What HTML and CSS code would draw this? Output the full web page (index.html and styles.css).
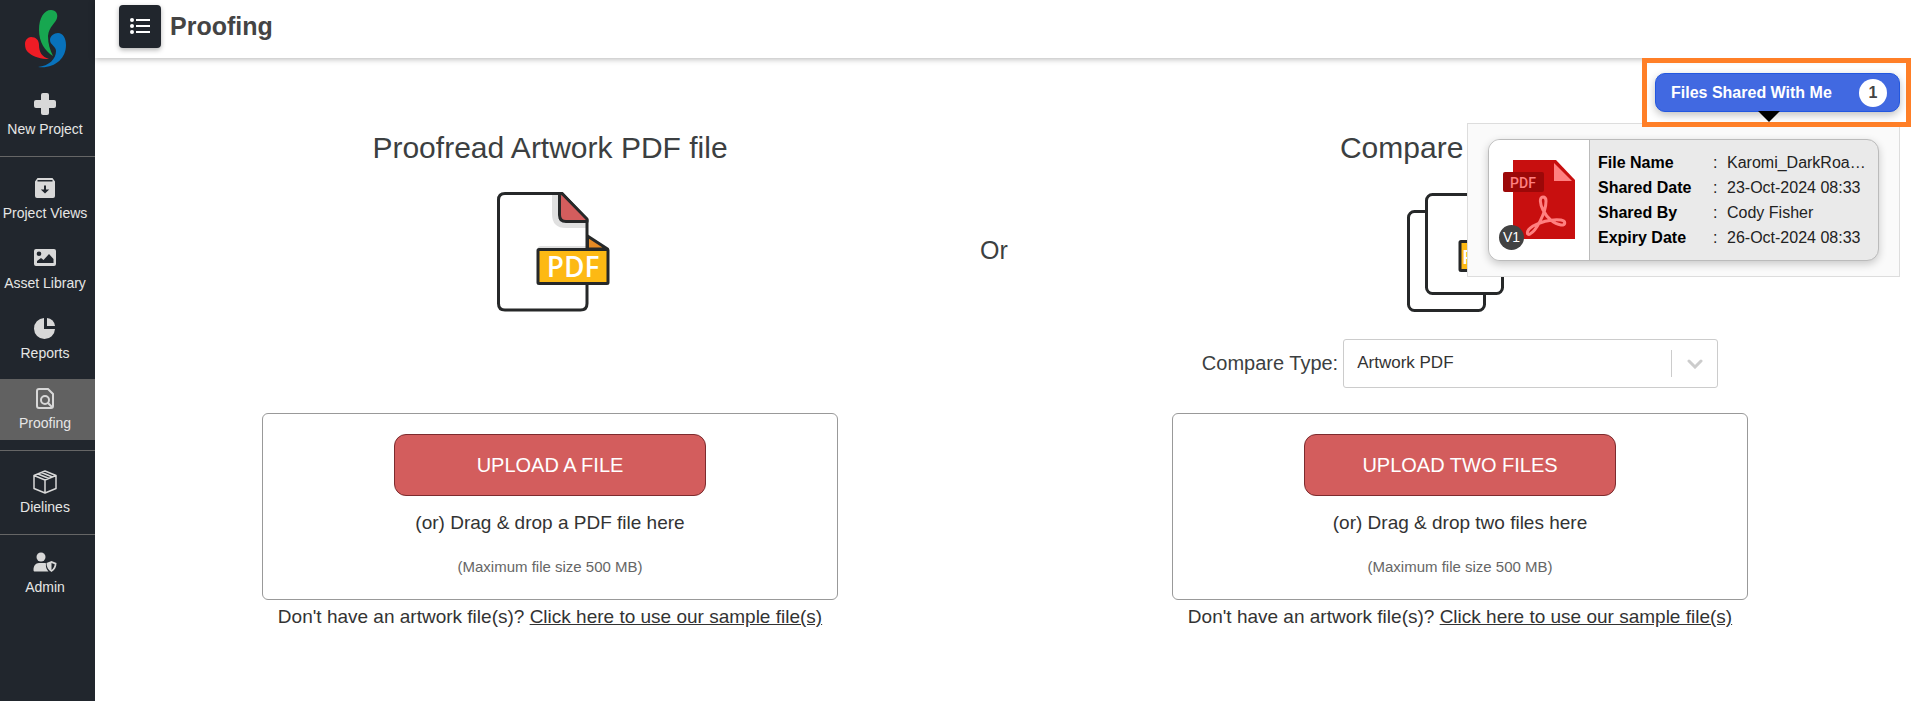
FILE: index.html
```
<!DOCTYPE html>
<html lang="en">
<head>
  <meta charset="UTF-8" />
  <meta name="viewport" content="width=device-width, initial-scale=1.0"/>
  <title>Proofing</title>
  <link rel="stylesheet" href="styles.css">
</head>
<body>
  <nav class="sidebar">
    <a href="#" class="logo" aria-label="Home">
      <svg width="42" height="58" viewBox="0 0 42 58">
        <path fill="#17a750" d="M26 0c5 0 7 4 6 8-1 5-8 8-9 18 0 8 2 14 5 20-8-5-14-14-14-26C14 8 19 0 26 0z"/>
        <path fill="#ee1c25" d="M6 27c5 0 8 3 8 8 0 7 3 12 10 14-8 0-15-2-20-6-3-2-4-5-4-9 0-4 3-7 6-7z"/>
        <path fill="#0872bc" d="M33 23c5 0 8 5 8 12 0 14-12 24-28 22 11-1 18-8 18-16 0-5-6-6-6-11 0-4 4-7 8-7z"/>
      </svg>
    </a>

    <div class="nav-group">
      <a href="#" class="nav-item">
        <svg class="nav-icon" viewBox="0 0 24 24"><rect x="8" y="1" width="8" height="22" rx="2"/><rect x="1" y="8" width="22" height="8" rx="2"/></svg>
        New Project
      </a>
    </div>

    <div class="nav-group">
      <a href="#" class="nav-item">
        <svg class="nav-icon" viewBox="0 0 24 24"><path fill-rule="evenodd" d="M4.500 2h15l2.500 3.500V20a2 2 0 0 1-2 2H4a2 2 0 0 1-2-2V5.500zM4.500 4v1.500h15V4zM11 9.500v4H7.800l4.200 4 4.200-4H13v-4z"/></svg>
        Project Views
      </a>
      <a href="#" class="nav-item">
        <svg class="nav-icon" viewBox="0 0 24 24"><path fill-rule="evenodd" d="M3 3h18a2 2 0 0 1 2 2v13a2 2 0 0 1-2 2H3a2 2 0 0 1-2-2V5a2 2 0 0 1 2-2zM6 5.500a2.300 2.300 0 1 0 0 4.600 2.300 2.300 0 0 0 0-4.600zM4 17h16.500v-4L16 8l-5.500 6L8 12l-4 3z"/></svg>
        Asset Library
      </a>
      <a href="#" class="nav-item">
        <svg class="nav-icon" viewBox="0 0 24 24"><path d="M11 2v11h11A10.500 10.500 0 1 1 11 2z"/><path d="M14 2a8.500 8.500 0 0 1 8 8h-8z"/></svg>
        Reports
      </a>
      <a href="#" class="nav-item active">
        <svg class="nav-icon" viewBox="0 0 24 24"><path fill="none" stroke="currentColor" stroke-width="2" d="M15 3H6a2 2 0 0 0-2 2v15a2 2 0 0 0 2 2h12a2 2 0 0 0 2-2V8zM15 17l4 4"/><circle cx="12" cy="14" r="4" fill="none" stroke="currentColor" stroke-width="2"/></svg>
        Proofing
      </a>
    </div>

    <div class="nav-group">
      <a href="#" class="nav-item">
        <svg class="nav-icon" viewBox="0 0 24 24"><path fill="none" stroke="currentColor" stroke-width="1.500" stroke-linejoin="round" d="M12 1l11 4.500v13L12 23 1 18.500v-13zM1 5.500L12 10l11-4.500M12 10v13M5 4l11 4.500M8.500 2.500l11 4.500"/></svg>
        Dielines
      </a>
    </div>

    <div class="nav-group">
      <a href="#" class="nav-item">
        <svg class="nav-icon" viewBox="0 0 24 24"><circle cx="8" cy="7" r="4.500"/><path d="M6 13h5c1 0 1.500 0 2 .5-.5 3 .5 6 2.500 8H2c-1 0-1.500-.5-1.500-1.500C.5 16 2.500 13 6 13z"/><path fill-rule="evenodd" d="M18.500 11l5 2c0 4-1.500 7-5 9-3.500-2-5-5-5-9zM18.500 13v7c2-1.500 3-3.500 3.200-5.700z"/></svg>
        Admin
      </a>
    </div>
  </nav>

  <div class="page">
    <header class="topbar">
      <button type="button" class="menu-btn" aria-label="Toggle menu">
        <svg width="20" height="18" viewBox="0 0 20 18" fill="#fff"><circle cx="2" cy="3" r="2"/><circle cx="2" cy="9" r="2"/><circle cx="2" cy="15" r="2"/><path d="M6 2h14v2H6zM6 8h14v2H6zM6 14h14v2H6z"/></svg>
      </button>
      <h1>Proofing</h1>
    </header>

    <main class="content">
      <section class="panel">
        <h2>Proofread Artwork PDF file</h2>
        <svg class="file-icon" viewBox="0 0 120 120">
          <path fill="#e0e0e0" d="M62 2v20q0 14 14 14h21v-8H68V2z"/>
          <path fill="#e0e0e0" d="M48 57v-1q0-2 3-2h46v3z"/>
          <g fill="none" stroke="#262829" stroke-width="3" stroke-linejoin="round">
            <path d="M72 1.500H15Q8.500 1.500 8.500 8v103.500q0 6.500 6.500 6.500h75.500q6.500 0 6.500-6.500V28z"/>
            <path fill="#d35d5d" d="M69.500 2v21q0 6.500 6.500 6.500h21V27L72 1.500z"/>
            <path fill="#e78a24" d="M97.500 44l20 13h-20z"/>
            <rect fill="#fdb913" x="48" y="57.500" width="70" height="34" rx="1"/>
          </g>
          <text x="83" y="85" text-anchor="middle" class="file-tag">PDF</text>
        </svg>

        <div class="drop-zone">
          <button type="button" class="upload-btn">UPLOAD A FILE</button>
          <p class="drop-text">(or) Drag &amp; drop a PDF file here</p>
          <p class="drop-limit">(Maximum file size 500 MB)</p>
        </div>
        <p class="sample">Don't have an artwork file(s)? <a href="#">Click here to use our sample file(s)</a></p>
      </section>

      <div class="or">Or</div>

      <section class="panel">
        <h2>Compare two files</h2>
        <svg class="file-icon" viewBox="0 0 120 120">
          <g fill="#fff" stroke="#262829" stroke-width="3" stroke-linejoin="round">
            <rect x="8.500" y="19.500" width="76" height="99" rx="6"/>
            <rect x="26.500" y="2.500" width="76" height="99" rx="6"/>
            <rect fill="#fdb913" x="60" y="49.500" width="54" height="29" rx="1"/>
          </g>
          <text x="62" y="72" class="file-tag small">PDF</text>
        </svg>

        <div class="compare-type">
          <label for="compareType">Compare Type:</label>
          <div class="select-wrap">
            <select id="compareType">
              <option>Artwork PDF</option>
            </select>
            <span class="select-arrow">
              <svg width="16" height="10" viewBox="0 0 16 10"><path d="M2 2l6 6 6-6" fill="none" stroke="#ccc" stroke-width="3" stroke-linecap="round"/></svg>
            </span>
          </div>
        </div>

        <div class="drop-zone">
          <button type="button" class="upload-btn">UPLOAD TWO FILES</button>
          <p class="drop-text">(or) Drag &amp; drop two files here</p>
          <p class="drop-limit">(Maximum file size 500 MB)</p>
        </div>
        <p class="sample">Don't have an artwork file(s)? <a href="#">Click here to use our sample file(s)</a></p>
      </section>

      <!-- shared files dropdown, sits over the panels -->
      <div class="shared">
        <div class="shared-highlight">
          <button type="button" class="shared-btn">Files Shared With Me <span class="count">1</span></button>
        </div>
        <div class="shared-popover">
          <div class="file-card">
            <div class="thumb">
              <svg width="72" height="79" viewBox="0 0 72 79">
                <path fill="#c80f0f" d="M10 0h43l19 20v59H10z"/>
                <path fill="#ff8080" d="M51 3l18 18H51z"/>
                <rect fill="#9c0808" y="12" width="41" height="20" rx="2"/>
                <text x="20" y="28" text-anchor="middle" class="thumb-tag">PDF</text>
                <path fill="none" stroke="#ff8080" stroke-width="3" d="M40 37c-4 0-3 7 0 13 4 8 11 14 18 15 5 0 5-4 0-5-9-1-20 2-28 6-8 5-6 10-3 8 6-3 16-21 16-33 0-3-1-4-3-4z"/>
              </svg>
              <span class="version">V1</span>
            </div>
            <table class="file-info">
              <tr><th>File Name</th><td class="sep">:</td><td>Karomi_DarkRoa…</td></tr>
              <tr><th>Shared Date</th><td class="sep">:</td><td>23-Oct-2024 08:33</td></tr>
              <tr><th>Shared By</th><td class="sep">:</td><td>Cody Fisher</td></tr>
              <tr><th>Expiry Date</th><td class="sep">:</td><td>26-Oct-2024 08:33</td></tr>
            </table>
          </div>
        </div>
      </div>
    </main>
  </div>
</body>
</html>
```
FILE: styles.css
```
* {
  box-sizing: border-box;
}

body {
  margin: 0;
  display: flex;
  min-height: 100vh;
  font-family: "Liberation Sans", Arial, sans-serif;
  color: #3c3f41;
  background: #fff;
}

h1, h2, p {
  margin: 0;
}

button, select {
  font-family: inherit;
  cursor: pointer;
}

/* sidebar */
.sidebar {
  flex: none;
  width: 95px;
  background: #21262d;
}

.logo {
  display: block;
  height: 85px;
  padding: 10px 0 0 25px;
}

.nav-group {
  display: flex;
  flex-direction: column;
  gap: 9px;
  padding: 12px 0 10px;
  border-top: 1px solid #666;
}

.logo + .nav-group {
  padding-top: 0;
  border-top: none;
}

.nav-group:last-child {
  padding-top: 8px;
}

.nav-item {
  display: flex;
  flex-direction: column;
  align-items: center;
  gap: 4px;
  height: 61px;
  padding: 7px 5px 0 0;
  font-size: 14px;
  line-height: 18px;
  white-space: nowrap;
  color: #e6e6e6;
  text-decoration: none;
}

.nav-item.active {
  background: #616161;
}

.nav-icon {
  width: 24px;
  height: 24px;
  fill: #d8d8d8;
  color: #d8d8d8;
}

/* top bar */
.page {
  flex: 1;
  min-width: 0;
  display: flex;
  flex-direction: column;
}

.topbar {
  display: flex;
  align-items: center;
  gap: 9px;
  height: 58px;
  padding: 0 24px 6px;
  box-shadow: 0 1px 6px rgba(0, 0, 0, 0.3);
}

.menu-btn {
  display: flex;
  align-items: center;
  justify-content: center;
  width: 42px;
  height: 43px;
  padding: 0;
  border: none;
  border-radius: 4px;
  background: #21262d;
  box-shadow: 0 2px 5px rgba(0, 0, 0, 0.3);
}

h1 {
  font-size: 25px;
  line-height: 30px;
  color: #444;
}

/* panels */
.content {
  position: relative;
  flex: 1;
  display: grid;
  grid-template-columns: 1fr 50px 1fr;
  align-content: start;
  padding: 72px 21px 40px 25px;
}

.panel {
  display: flex;
  flex-direction: column;
  align-items: center;
}

h2 {
  font-size: 30px;
  font-weight: normal;
  line-height: 36px;
}

.file-icon {
  width: 120px;
  height: 120px;
  margin-top: 26px;
}

.file-tag {
  font-family: "Open Sans", sans-serif;
  font-size: 28px;
  font-weight: 600;
  fill: #fff;
}

.file-tag.small {
  font-size: 20px;
}

.or {
  margin-top: 102px;
  font-size: 25px;
  line-height: 36px;
}

.compare-type {
  display: flex;
  align-items: center;
  gap: 5px;
  margin: 27px 0 25px;
  font-size: 20px;
}

.select-wrap {
  position: relative;
  width: 375px;
}

.select-wrap select {
  width: 100%;
  height: 49px;
  padding: 0 56px 2px 13px;
  border: 1px solid #ccc;
  border-radius: 3px;
  appearance: none;
  background: #fff;
  font-size: 17px;
  color: #333;
}

.select-arrow {
  position: absolute;
  top: 11px;
  right: 1px;
  display: flex;
  align-items: center;
  justify-content: center;
  width: 46px;
  height: 27px;
  border-left: 1px solid #ccc;
  pointer-events: none;
}

.drop-zone {
  width: 100%;
  max-width: 576px;
  margin-top: auto;
  padding: 20px 20px 22px;
  border: 1px solid #999;
  border-radius: 6px;
  text-align: center;
}

.upload-btn {
  width: 312px;
  height: 62px;
  border: 1px solid #7c2b2e;
  border-radius: 12px;
  background: #d35d5d;
  font-size: 20px;
  color: #fff;
}

.drop-text {
  margin-top: 15px;
  font-size: 19px;
  line-height: 24px;
  color: #333;
}

.drop-limit {
  margin-top: 22px;
  font-size: 15px;
  line-height: 20px;
  color: #666;
}

.sample {
  margin-top: 5px;
  font-size: 19px;
  line-height: 24px;
  color: #333;
}

.sample a {
  color: inherit;
}

/* files shared with me */
.shared {
  position: absolute;
  top: 0;
  right: 0;
}

.shared-highlight {
  position: relative;
  z-index: 1;
  padding: 10px 6px 10px 8px;
  border: 5px solid #ff7f27;
}

.shared-btn {
  position: relative;
  display: flex;
  align-items: center;
  justify-content: space-between;
  width: 245px;
  height: 39px;
  padding: 0 12px 0 15px;
  border: 1px solid #2257e0;
  border-radius: 10px;
  background: #4169e1;
  box-shadow: 0 3px 8px rgba(0, 0, 0, 0.25);
  font-size: 16px;
  font-weight: bold;
  color: #fff;
}

.shared-btn::after {
  content: "";
  position: absolute;
  top: 100%;
  left: 102px;
  border: 11px solid transparent;
  border-top-color: #000;
  border-bottom: none;
}

.count {
  width: 28px;
  height: 28px;
  border-radius: 50%;
  background: #fff;
  line-height: 28px;
  color: #444;
}

.shared-popover {
  position: absolute;
  top: 65px;
  right: 11px;
  width: 433px;
  padding: 15px 20px;
  border: 1px solid #ddd;
  background: #fafafa;
}

.file-card {
  display: flex;
  height: 122px;
  border: 1px solid #bbb;
  border-radius: 12px;
  background: #eaeaea;
  box-shadow: 0 3px 8px rgba(0, 0, 0, 0.2);
  overflow: hidden;
}

.thumb {
  position: relative;
  flex: none;
  width: 101px;
  padding: 20px 0 0 14px;
  border-right: 1px solid #bbb;
  background: #fff;
}

.thumb-tag {
  font-family: Roboto, sans-serif;
  font-size: 14px;
  font-weight: 500;
  fill: #ff8080;
}

.version {
  position: absolute;
  left: 10px;
  bottom: 10px;
  width: 25px;
  height: 25px;
  border-radius: 50%;
  background: #424242;
  font-size: 14px;
  line-height: 25px;
  text-align: center;
  color: #fff;
}

.file-info {
  margin: 10px 0 0 8px;
  border-collapse: collapse;
  align-self: flex-start;
  font-size: 16px;
  line-height: 25px;
  color: #222;
}

.file-info th {
  width: 115px;
  padding: 0;
  text-align: left;
  color: #000;
}

.file-info td {
  padding: 0;
  white-space: nowrap;
}

.file-info .sep {
  width: 14px;
}
```
